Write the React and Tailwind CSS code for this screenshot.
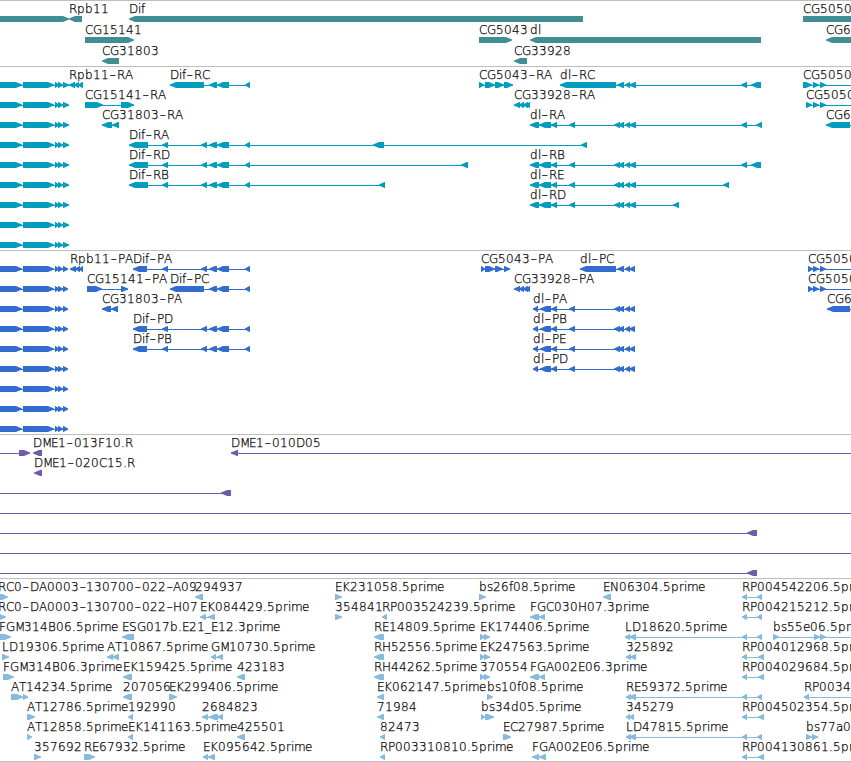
import React from "react";

const WIDTH = 851;

// A feature is { x, label, dir, boxes: [[start, end], ...], to }
// dir: 1 = forward strand, -1 = reverse strand. "to" extends the intron line.
const f = (x, label, dir, boxes, to) => ({ x, label, dir, boxes, to });

const genes = [
  [
    f(0, "", 1, [[-20, 69]]),
    f(69, "Rpb11", -1, [[69, 82]]),
    f(129, "Dif", -1, [[129, 583]]),
    f(803, "CG5050", 1, [[803, 880]]),
  ],
  [
    f(85, "CG15141", 1, [[85, 134]]),
    f(479, "CG5043", 1, [[479, 512]]),
    f(530, "dl", -1, [[530, 761]]),
    f(826, "CG6", -1, [[826, 880]]),
  ],
  [f(102, "CG31803", -1, [[102, 119]]), f(514, "CG33928", -1, [[514, 527]])],
];

const leftGene = (end) => f(0, "", 1, [[-20, 22], [23, 54], [55, 59], [58, 63], [63, end]]);
const difTail = [[162, 168], [201, 207], [209, 217], [217, 229], [245, 250]];
const difC = [[170, 204], [209, 217], [217, 229], [245, 250]];
const dlMid = [[569, 575], [614, 620], [618, 624], [625, 630], [629, 636]];
const dlR = [[530, 539], [539, 551], [551, 557], ...dlMid];
const dlP = [[533, 538], [540, 551], [551, 557], [569, 575], [614, 620], [618, 624], [625, 630], [629, 635]];
const cg339 = [[514, 520], [519, 524], [523, 528], [526, 530]];

const transcripts = [
  [
    leftGene(69),
    f(69, "Rpb11-RA", -1, [[69, 75], [74, 79], [78, 83]]),
    f(170, "Dif-RC", -1, difC),
    f(479, "CG5043-RA", 1, [[479, 484], [485, 495], [495, 504], [504, 513]]),
    f(560, "dl-RC", -1, [[560, 616], [617, 624], [625, 630], [629, 636], [741, 747], [751, 761]]),
    f(803, "CG5050", 1, [[803, 812], [813, 819], [820, 826]], WIDTH),
  ],
  [
    leftGene(69),
    f(85, "CG15141-RA", 1, [[85, 103], [121, 134]]),
    f(514, "CG33928-RA", -1, cg339),
    f(806, "CG5050", 1, [[806, 812], [813, 819], [820, 826]], WIDTH),
  ],
  [
    leftGene(69),
    f(102, "CG31803-RA", -1, [[102, 112], [112, 119]]),
    f(530, "dl-RA", -1, [...dlR, [741, 747], [756, 762]]),
    f(826, "CG6", -1, [[826, 850]], WIDTH),
  ],
  [leftGene(69), f(129, "Dif-RA", -1, [[129, 148], ...difTail, [373, 384], [581, 587]])],
  [
    leftGene(69),
    f(129, "Dif-RD", -1, [[129, 148], ...difTail, [461, 468]]),
    f(530, "dl-RB", -1, [...dlR, [741, 747], [751, 761]]),
  ],
  [
    leftGene(69),
    f(129, "Dif-RB", -1, [[129, 148], ...difTail, [379, 385]]),
    f(530, "dl-RE", -1, [...dlR, [723, 729]]),
  ],
  [leftGene(69), f(530, "dl-RD", -1, [...dlR, [673, 679]])],
  [leftGene(69)],
  [leftGene(69)],
];

const proteins = [
  [
    leftGene(68),
    f(70, "Rpb11-PA", -1, [[70, 76], [75, 80], [79, 83]]),
    f(133, "Dif-PA", -1, [[133, 147], ...difTail]),
    f(481, "CG5043-PA", 1, [[481, 485], [485, 495], [495, 503], [504, 510]]),
    f(580, "dl-PC", -1, [[580, 616], [617, 624], [625, 630], [629, 635]]),
    f(808, "CG5050", 1, [[808, 813], [813, 819], [820, 826]], WIDTH),
  ],
  [
    leftGene(68),
    f(87, "CG15141-PA", 1, [[87, 102], [121, 128]]),
    f(170, "Dif-PC", -1, difC),
    f(514, "CG33928-PA", -1, cg339),
    f(808, "CG5050", 1, [[808, 813], [813, 819], [820, 826]], WIDTH),
  ],
  [
    leftGene(68),
    f(102, "CG31803-PA", -1, [[102, 111], [111, 118]]),
    f(533, "dl-PA", -1, dlP),
    f(827, "CG6", -1, [[827, 850]], WIDTH),
  ],
  [leftGene(68), f(133, "Dif-PD", -1, [[133, 147], ...difTail]), f(533, "dl-PB", -1, dlP)],
  [leftGene(68), f(133, "Dif-PB", -1, [[133, 147], ...difTail]), f(533, "dl-PE", -1, dlP)],
  [leftGene(68), f(533, "dl-PD", -1, dlP)],
  [leftGene(68)],
  [leftGene(68)],
  [leftGene(68)],
];

const clones = [
  [
    f(0, "", 1, [[-20, -10], [19, 30]]),
    f(33, "DME1-013F10.R", -1, [[33, 42]]),
    f(231, "DME1-010D05", -1, [[231, 238]], WIDTH),
  ],
  [f(34, "DME1-020C15.R", -1, [[34, 42]])],
  [f(0, "", -1, [[-20, -10], [221, 231]])],
  [f(0, "", -1, [[-20, -10]], WIDTH)],
  [f(0, "", -1, [[-20, -10], [747, 757]])],
  [f(0, "", -1, [[-20, -10]], WIDTH)],
  [f(0, "", -1, [[-20, -10], [747, 757]])],
];

const rpShort = [[742, 747], [757, 762]];
const rpLong = [[742, 747], [758, 764]];
const ests = [
  [
    f(-2, "RC0-DA0003-130700-022-A09", 1, [[-5, 8]]),
    f(195, "294937", -1, [[195, 203]]),
    f(335, "EK231058.5prime", 1, [[335, 342]]),
    f(479, "bs26f08.5prime", 1, [[479, 486]]),
    f(603, "EN06304.5prime", -1, [[603, 611]]),
    f(742, "RP004542206.5prime", -1, rpShort),
  ],
  [
    f(-2, "RC0-DA0003-130700-022-H07", 1, [[-5, 6]]),
    f(200, "EK084429.5prime", -1, [[200, 206], [208, 215]]),
    f(335, "354841", 1, [[335, 342]]),
    f(382, "RP003524239.5prime", -1, [[382, 387]]),
    f(530, "FGC030H07.3prime", -1, [[530, 539], [539, 545]]),
    f(742, "RP004215212.5prime", -1, rpShort),
  ],
  [
    f(-1, "FGM314B06.5prime", 1, [[-5, 11]]),
    f(122, "ESG017b.E21_E12.3prime", -1, [[122, 134]]),
    f(374, "RE14809.5prime", -1, [[374, 384]]),
    f(480, "EK174406.5prime", 1, [[480, 485], [484, 490]]),
    f(625, "LD18620.5prime", -1, [[625, 630], [629, 636], ...rpShort]),
    f(773, "bs55e06.5prime", 1, [[773, 779], [814, 820], [820, 826]], WIDTH),
  ],
  [
    f(2, "LD19306.5prime", 1, [[2, 9]]),
    f(107, "AT10867.5prime", -1, [[107, 113], [112, 119]]),
    f(211, "GM10730.5prime", -1, [[211, 216], [217, 223]]),
    f(374, "RH52556.5prime", -1, [[374, 384]]),
    f(480, "EK247563.5prime", 1, [[480, 485], [484, 490]]),
    f(626, "325892", -1, [[626, 631], [630, 636]]),
    f(742, "RP004012968.5prime", -1, rpLong),
  ],
  [
    f(3, "FGM314B06.3prime", 1, [[3, 14]]),
    f(123, "EK159425.5prime", -1, [[123, 132]]),
    f(237, "423183", -1, [[237, 245]]),
    f(374, "RH44262.5prime", -1, [[374, 384]]),
    f(480, "370554", 1, [[480, 485], [484, 490]]),
    f(530, "FGA002E06.3prime", -1, [[530, 539], [539, 545]]),
    f(742, "RP004029684.5prime", -1, rpLong),
  ],
  [
    f(11, "AT14234.5prime", 1, [[11, 23], [23, 28]]),
    f(123, "207056", -1, [[123, 132]]),
    f(169, "EK299406.5prime", 1, [[169, 177]]),
    f(377, "EK062147.5prime", -1, [[377, 384]]),
    f(487, "bs10f08.5prime", 1, [[487, 493]]),
    f(626, "RE59372.5prime", -1, [[626, 631], [629, 636], ...rpShort]),
    f(804, "RP0034", -1, [[804, 809]], WIDTH),
  ],
  [
    f(27, "AT12786.5prime", 1, [[27, 35]]),
    f(128, "192990", -1, [[128, 133]]),
    f(202, "2684823", -1, [[202, 208], [209, 218], [217, 223]]),
    f(377, "71984", -1, [[377, 384]]),
    f(481, "bs34d05.5prime", 1, [[481, 485], [485, 494]]),
    f(626, "345279", -1, [[626, 630], [629, 634]]),
    f(742, "RP004502354.5prime", -1, rpLong),
  ],
  [
    f(27, "AT12858.5prime", 1, [[27, 32]]),
    f(128, "EK141163.5prime", -1, [[128, 133]]),
    f(237, "425501", -1, [[237, 245]]),
    f(380, "82473", -1, [[380, 385]]),
    f(503, "EC27987.5prime", 1, [[503, 511]]),
    f(626, "LD47815.5prime", -1, [[626, 631], [629, 636], ...rpShort]),
    f(806, "bs77a0", 1, [[806, 812], [812, 818]]),
  ],
  [
    f(34, "357692", 1, [[34, 41]]),
    f(84, "RE67932.5prime", 1, [[84, 95]]),
    f(203, "EK095642.5prime", -1, [[203, 208], [208, 215]]),
    f(380, "RP003310810.5prime", -1, [[380, 385]]),
    f(532, "FGA002E06.5prime", -1, [[532, 539], [539, 546]]),
    f(742, "RP004130861.5prime", -1, rpLong),
  ],
];

// Whole pixel advances, everything not listed is 8px wide
const advances = {
  "-": 7.5, ".": 4, _: 6, B: 7.5, D: 9, E: 7, F: 7, G: 9, H: 9, L: 7, M: 9, N: 9, P: 7, T: 7,
  a: 7, e: 7, f: 4, i: 3, l: 3, m: 11, r: 5, s: 6,
};

const Label = ({ x, text }) => {
  let pos = x;
  const chars = text.split("").map((ch) => {
    const at = Math.round(pos);
    pos += advances[ch] || 8;
    return { ch, at };
  });
  return (
    <text y="13" fill="#000" stroke="#000" strokeWidth="0.25">
      {chars.map(({ ch, at }, i) =>
        ch === "-" ? (
          <tspan key={i} x={at + 0.5} textLength="6.5" lengthAdjust="spacingAndGlyphs">
            -
          </tspan>
        ) : (
          <tspan key={i} x={at}>
            {ch}
          </tspan>
        )
      )}
    </text>
  );
};

// Box with a pointed end in the direction of the strand
const arrowPoints = ([a, b], dir) => {
  const head = Math.min(6, b - a - 0.5);
  if (dir > 0) {
    return `${a},16 ${b - head},16 ${b},18.5 ${b},19.5 ${b - head},22 ${a},22`;
  }
  return `${b},16 ${a + head},16 ${a},18.5 ${a},19.5 ${a + head},22 ${b},22`;
};

const Feature = ({ feature, color }) => {
  const { x, label, dir, boxes, to } = feature;
  const start = boxes[0][0];
  const end = to || boxes[boxes.length - 1][1];
  return (
    <g>
      {(boxes.length > 1 || to) && (
        <rect x={start} y="19" width={end - start} height="1" fill={color} />
      )}
      {boxes.map((box, i) => (
        <polygon key={i} points={arrowPoints(box, dir)} fill={color} />
      ))}
      {label && <Label x={x} text={label} />}
    </g>
  );
};

const Track = ({ rows, color, pitch = 20, className }) => (
  <section className={`w-full border-t border-[#bebebe] overflow-hidden ${className}`}>
    <svg width={WIDTH} height="100%" className="block -mt-px">
      {rows.map((row, i) => (
        <g key={i} transform={`translate(0 ${i * pitch})`}>
          {row.map((feature, j) => (
            <Feature key={j} feature={feature} color={color} />
          ))}
        </g>
      ))}
    </svg>
  </section>
);

const App = () => {
  return (
    <div className="w-[851px] h-[762px] overflow-hidden bg-white flex flex-col border-b border-[#bebebe] text-[12px] font-extralight font-['DejaVu_Sans',sans-serif]">
      <Track rows={genes} color="#408e93" pitch={21} className="h-[66px]" />
      <Track rows={transcripts} color="#009dbf" className="h-[184px]" />
      <Track rows={proteins} color="#316cce" className="h-[184px]" />
      <Track rows={clones} color="#735aa8" className="h-[144px]" />
      <Track rows={ests} color="#86bbdd" className="h-[183px]" />
    </div>
  );
};

export default App;
